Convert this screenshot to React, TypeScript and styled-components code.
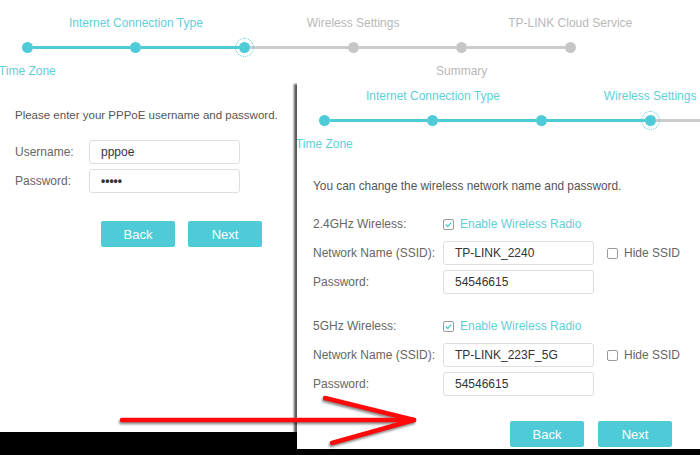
import React from 'react';
import styled, { createGlobalStyle, css } from 'styled-components';

const GlobalStyle = createGlobalStyle`
    html, body {
        margin : 0;
        padding : 0;
        background : #000000;
    }
    body {
        font-family : "Liberation Sans", Arial, sans-serif;
        font-size : 12px;
        color : #666666;
    }
`

const TEAL = '#4ecbd6';
const GRAY_LINE = '#cccccc';

const Screen = styled.div`
    position : relative;
    width : 700px;
    height : 455px;
    background : #000000;
    overflow : hidden;
`

const BackWindow = styled.div`
    width : 700px;
    height : 432px;
    background : #FFFFFF;
    overflow : hidden;
    padding-top : 15px;
    box-sizing : border-box;
`

// the second wizard window dropped on top of the first one
const Panel = styled.div`
    position : absolute;
    left : 297px;
    top : 80px;
    width : 420px;
    height : 369px;
    padding-top : 8px;
    box-sizing : border-box;
    background : #FFFFFF;
    box-shadow : -3px 4px 2px rgba(0, 0, 0, 0.65);
    overflow : hidden;
`

/* ---------- stepper ---------- */

const StepTrack = styled.div`
    display : flex;
    margin-left : -27px;
`

const StepCol = styled.div`
    flex : 0 0 108.6px;
    min-width : 0;
    display : grid;
    grid-template-columns : minmax(0, 1fr);
    grid-template-rows : 16px 16px 16px;
    row-gap : 8px;
`

const StepLabel = styled.div<{ $active: boolean }>`
    display : flex;
    justify-content : center;
    min-width : 0;
    white-space : nowrap;
    line-height : 16px;
    font-size : 12px;
    color : ${(p) => (p.$active ? '#5fcfd9' : '#b8b8b8')};
`

const DotRow = styled.div`
    display : flex;
    align-items : center;
`

const HalfLine = styled.div<{ $color?: string }>`
    flex : 1;
    height : 3px;
    background : ${(p) => p.$color || 'transparent'};
`

const Dot = styled.span<{ $done: boolean; $current: boolean }>`
    position : relative;
    flex : 0 0 11px;
    height : 11px;
    border-radius : 50%;
    background : ${(p) => (p.$done ? TEAL : '#c6c6c6')};
    ${(p) => p.$current && css`
        &::after {
            content : '';
            position : absolute;
            inset : -4px;
            border : 1.5px dotted ${TEAL};
            border-radius : 50%;
        }
    `}
`

type Step = { label: string; side: 'top' | 'bottom' };

const steps: Step[] = [
    { label: 'Time Zone', side: 'bottom' },
    { label: 'Internet Connection Type', side: 'top' },
    { label: '', side: 'top' },
    { label: 'Wireless Settings', side: 'top' },
    { label: 'Summary', side: 'bottom' },
    { label: 'TP-LINK Cloud Service', side: 'top' },
];

const Stepper = ({ current, count }: { current: number; count: number }) => (
    <StepTrack>
        {steps.slice(0, count).map((s, i) => (
            <StepCol key={i}>
                <StepLabel $active={i <= current}>{s.side === 'top' ? s.label : ''}</StepLabel>
                <DotRow>
                    <HalfLine $color={i === 0 ? undefined : i <= current ? TEAL : GRAY_LINE} />
                    <Dot $done={i <= current} $current={i === current} />
                    <HalfLine $color={i === steps.length - 1 ? undefined : i < current ? TEAL : GRAY_LINE} />
                </DotRow>
                <StepLabel $active={i <= current}>{s.side === 'bottom' ? s.label : ''}</StepLabel>
            </StepCol>
        ))}
    </StepTrack>
)

/* ---------- form parts ---------- */

const Form = styled.div<{ $pad: number }>`
    padding-left : ${(p) => p.$pad}px;
    display : flex;
    flex-direction : column;
`

const Intro = styled.div<{ $top: number; $size: number }>`
    margin-top : ${(p) => p.$top}px;
    line-height : 16px;
    font-size : ${(p) => p.$size}px;
    color : #555555;
    white-space : nowrap;
`

const Row = styled.div<{ $label: number; $top?: number; $h?: number }>`
    display : grid;
    grid-template-columns : ${(p) => p.$label}px 151px auto;
    align-items : center;
    column-gap : 13px;
    height : ${(p) => p.$h ?? 24}px;
    margin-top : ${(p) => p.$top ?? 5}px;
    white-space : nowrap;
`

const FieldLabel = styled.span`
    color : #666666;
`

const TextBox = styled.div`
    height : 24px;
    box-sizing : border-box;
    border : 1px solid #dedede;
    border-radius : 3px;
    padding : 0 11px;
    line-height : 22px;
    color : #333333;
    font-size : 12px;
`

const Masked = styled.span`
    font-weight : bold;
`

const CheckWrap = styled.label<{ $teal?: boolean }>`
    display : flex;
    align-items : center;
    gap : 6px;
    color : ${(p) => (p.$teal ? '#5fcfd9' : '#666666')};
`

const Box = styled.span`
    width : 11px;
    height : 11px;
    box-sizing : border-box;
    border : 1px solid #9a9a9a;
    border-radius : 2px;
    display : flex;
    align-items : center;
    justify-content : center;
    background : #FFFFFF;
`

const Check = ({ on, label, teal }: { on: boolean; label: string; teal?: boolean }) => (
    <CheckWrap $teal={teal}>
        <Box>
            {on && (
                <svg width="9" height="9" viewBox="0 0 9 9">
                    <polyline points="1.8,4.6 3.7,6.4 7.2,2.6" fill="none" stroke={TEAL} strokeWidth="1.4" />
                </svg>
            )}
        </Box>
        {label}
    </CheckWrap>
)

const ButtonBar = styled.div<{ $indent: number; $top: number; $gap: number }>`
    display : flex;
    gap : ${(p) => p.$gap}px;
    margin-top : ${(p) => p.$top}px;
    padding-left : ${(p) => p.$indent}px;
`

const Button = styled.button`
    width : 74px;
    height : 26px;
    border : none;
    border-radius : 2px;
    background : ${TEAL};
    color : #FFFFFF;
    font-family : "Liberation Sans", Arial, sans-serif;
    font-size : 13px;
    padding : 0;
`

// the red arrow scribbled over the screenshot
const Arrow = styled.svg`
    position : absolute;
    left : 0;
    top : 0;
    pointer-events : none;
    filter : drop-shadow(-1px 2px 1px rgba(0, 0, 0, 0.45));
`

const WirelessBlock = ({ band, ssid }: { band: string; ssid: string }) => (
    <>
        <Row $label={117} $top={0} $h={16}>
            <FieldLabel>{band}</FieldLabel>
            <Check on label="Enable Wireless Radio" teal />
        </Row>
        <Row $label={117} $top={9}>
            <FieldLabel>Network Name (SSID):</FieldLabel>
            <TextBox>{ssid}</TextBox>
            <Check on={false} label="Hide SSID" />
        </Row>
        <Row $label={117}>
            <FieldLabel>Password:</FieldLabel>
            <TextBox>54546615</TextBox>
        </Row>
    </>
)

const Spacer = styled.div<{ $h: number }>`
    height : ${(p) => p.$h}px;
`

const App = () => {
    return (
        <>
            <GlobalStyle />
            <Screen>
                <BackWindow>
                    <Stepper current={2} count={6} />
                    <Form $pad={15}>
                        <Intro $top={28} $size={11.5}>Please enter your PPPoE username and password.</Intro>
                        <Row $label={61} $top={17}>
                            <FieldLabel>Username:</FieldLabel>
                            <TextBox>pppoe</TextBox>
                        </Row>
                        <Row $label={61}>
                            <FieldLabel>Password:</FieldLabel>
                            <TextBox><Masked>•••••</Masked></TextBox>
                        </Row>
                        <ButtonBar $indent={86} $top={28} $gap={13}>
                            <Button>Back</Button>
                            <Button>Next</Button>
                        </ButtonBar>
                    </Form>
                </BackWindow>

                <Panel>
                    <Stepper current={3} count={4} />
                    <Form $pad={16}>
                        <Intro $top={26} $size={11.85}>You can change the wireless network name and password.</Intro>
                        <Spacer $h={22} />
                        <WirelessBlock band="2.4GHz Wireless:" ssid="TP-LINK_2240" />
                        <Spacer $h={24} />
                        <WirelessBlock band="5GHz Wireless:" ssid="TP-LINK_223F_5G" />
                        <ButtonBar $indent={197} $top={25} $gap={14}>
                            <Button>Back</Button>
                            <Button>Next</Button>
                        </ButtonBar>
                    </Form>
                </Panel>

                <Arrow width="700" height="455" viewBox="0 0 700 455">
                    <g stroke="#ff0a0a" strokeWidth="4.5" strokeLinecap="round" fill="none">
                        <line x1="122" y1="420" x2="414" y2="420" />
                        <line x1="325" y1="398" x2="414" y2="420" />
                        <line x1="332" y1="443" x2="414" y2="420" />
                    </g>
                </Arrow>
            </Screen>
        </>
    )
}

export default App;
